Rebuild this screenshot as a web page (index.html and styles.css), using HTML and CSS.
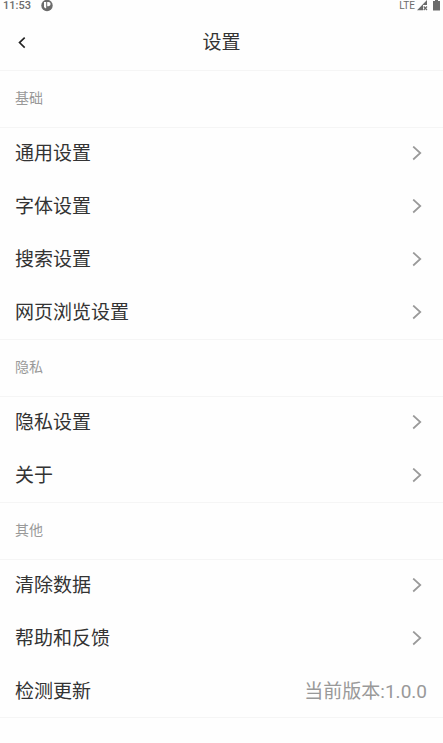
FILE: index.html
```html
<!DOCTYPE html>
<html lang="zh-CN">
<head>
<meta charset="utf-8">
<meta name="viewport" content="width=device-width, initial-scale=1">
<title>设置</title>
<link rel="stylesheet" href="styles.css">
</head>
<body>
<svg width="0" height="0" class="sprite" aria-hidden="true">
  <symbol id="chevron" viewBox="0 0 10 16"><path d="M1.200 .5 8.300 7l-7.100 6.500" fill="none" stroke="currentColor" stroke-width="1.700"/></symbol>
</svg>
<div class="status">
  <span class="clock">11:53</span>
  <svg class="notice" width="12" height="12" viewBox="0 0 12 12" aria-hidden="true">
    <circle cx="6" cy="5.500" r="5.700" fill="#6b6b6b"/>
    <path d="M3 2h2.200v6.300H4.200L3 7zM6.200 2h1.300a2.100 2.100 0 0 1 0 4.200H6.200z" fill="#fff"/>
  </svg>
  <span class="network">LTE</span>
  <svg class="signal" width="11" height="11" viewBox="0 0 11 11" aria-hidden="true">
    <path d="M0 10.300 10 0v5H6v5.300z" fill="#6b6b6b"/>
    <path d="M6.700 6.500l3.300 3.500M10 6.500l-3.300 3.500" stroke="#6b6b6b" stroke-width="1.200"/>
  </svg>
  <svg class="battery" width="7" height="11" viewBox="0 0 7 11" aria-hidden="true">
    <path d="M2 0h3v1h2v9.500H0V1h2z" fill="#6b6b6b"/>
  </svg>
</div>
<header class="bar">
  <button class="back" type="button" aria-label="返回">
    <svg width="8" height="12" viewBox="0 0 8 12" aria-hidden="true"><path d="M6.700 .6 1.500 5.600l5.200 5" fill="none" stroke="currentColor" stroke-width="1.600"/></svg>
  </button>
  <h1 class="title">设置</h1>
</header>
<main>
  <section>
    <h2 class="group">基础</h2>
    <nav class="list">
      <a class="row" href="#general">通用设置<svg class="arrow"><use href="#chevron"/></svg></a>
      <a class="row" href="#font">字体设置<svg class="arrow"><use href="#chevron"/></svg></a>
      <a class="row" href="#search">搜索设置<svg class="arrow"><use href="#chevron"/></svg></a>
      <a class="row" href="#browse">网页浏览设置<svg class="arrow"><use href="#chevron"/></svg></a>
    </nav>
  </section>
  <section>
    <h2 class="group">隐私</h2>
    <nav class="list">
      <a class="row" href="#privacy">隐私设置<svg class="arrow"><use href="#chevron"/></svg></a>
      <a class="row" href="#about">关于<svg class="arrow"><use href="#chevron"/></svg></a>
    </nav>
  </section>
  <section>
    <h2 class="group">其他</h2>
    <nav class="list last">
      <a class="row" href="#clear">清除数据<svg class="arrow"><use href="#chevron"/></svg></a>
      <a class="row" href="#help">帮助和反馈<svg class="arrow"><use href="#chevron"/></svg></a>
      <a class="row" href="#update">检测更新<span class="version">当前版本:1.0.0</span></a>
    </nav>
  </section>
</main>
</body>
</html>
```
FILE: styles.css
```css
* {
  box-sizing: border-box;
}

body {
  margin: 0;
  background: #fefefe;
  color: #333;
  font-family: Roboto, "Noto Sans CJK SC", sans-serif;
}

.sprite {
  display: block;
}

.status {
  display: flex;
  align-items: center;
  height: 11px;
  padding: 0 3px;
  color: #6b6b6b;
  font-size: 11px;
  line-height: 11px;
}

.clock {
  font-weight: 500;
}

.notice {
  margin-left: 10px;
}

.network {
  margin-left: auto;
  font-size: 10px;
}

.signal {
  margin: 0 5px 0 2px;
}

.bar {
  display: grid;
  grid-template-columns: 44px 1fr 44px;
  align-items: center;
  height: 59px;
  padding-top: 5px;
}

.back {
  display: flex;
  align-items: center;
  height: 44px;
  padding: 0 0 0 18px;
  border: 0;
  background: none;
  color: #222;
}

.title {
  margin: 0;
  font-size: 19px;
  font-weight: 400;
  line-height: 28px;
  text-align: center;
}

.group {
  display: flex;
  align-items: center;
  height: 57px;
  margin: 0;
  padding: 0 15px 2px;
  border-top: 1px solid #f5f5f5;
  color: #999;
  font-size: 14px;
  font-weight: 400;
  line-height: 20px;
}

.list {
  box-shadow: inset 0 1px #f5f5f5;
}

.last {
  box-shadow: inset 0 1px #f5f5f5, inset 0 -1px #f5f5f5;
}

.row {
  display: flex;
  align-items: center;
  justify-content: space-between;
  height: 53px;
  padding: 1px 16px 0 15px;
  color: #333;
  font-size: 19px;
  line-height: 28px;
  text-decoration: none;
}

.arrow {
  width: 10px;
  height: 16px;
  margin-right: 5px;
  color: #999;
}

.version {
  color: #999;
}
```
